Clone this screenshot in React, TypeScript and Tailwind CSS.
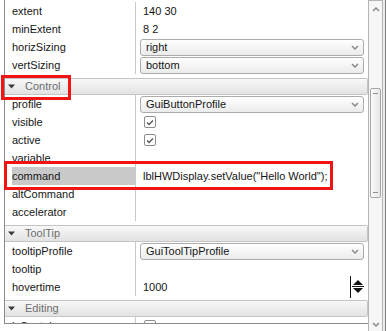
import * as React from "react"

type Field =
  | { name: string; kind: "text"; value: string }
  | { name: string; kind: "select"; value: string }
  | { name: string; kind: "check"; checked: boolean }
  | { name: string; kind: "spin"; value: string }
  | { name: string; kind: "empty" }

interface Group {
  title?: string
  fields: Field[]
}

const groups: Group[] = [
  {
    fields: [
      { name: "extent", kind: "text", value: "140 30" },
      { name: "minExtent", kind: "text", value: "8 2" },
      { name: "horizSizing", kind: "select", value: "right" },
      { name: "vertSizing", kind: "select", value: "bottom" },
    ],
  },
  {
    title: "Control",
    fields: [
      { name: "profile", kind: "select", value: "GuiButtonProfile" },
      { name: "visible", kind: "check", checked: true },
      { name: "active", kind: "check", checked: true },
      { name: "variable", kind: "empty" },
      { name: "command", kind: "text", value: 'lblHWDisplay.setValue("Hello World");' },
      { name: "altCommand", kind: "empty" },
      { name: "accelerator", kind: "empty" },
    ],
  },
  {
    title: "ToolTip",
    fields: [
      { name: "tooltipProfile", kind: "select", value: "GuiToolTipProfile" },
      { name: "tooltip", kind: "empty" },
      { name: "hovertime", kind: "spin", value: "1000" },
    ],
  },
  {
    title: "Editing",
    fields: [{ name: "isContainer", kind: "check", checked: false }],
  },
]

function Chevron({ up = false }: { up?: boolean }) {
  return (
    <svg width="8" height="5" viewBox="0 0 8 5" className="shrink-0">
      <path
        d={up ? "M1 4 L4 1 L7 4" : "M1 1 L4 4 L7 1"}
        fill="none"
        stroke="#8a8a8a"
        strokeWidth="1.5"
      />
    </svg>
  )
}

function SelectBox({ value }: { value: string }) {
  return (
    <div className="mx-[4px] flex h-[17px] flex-1 items-center justify-between rounded-[3px] border border-[#ababab] bg-gradient-to-b from-white to-[#ebebeb] pl-[5px] pr-[4px]">
      <span>{value}</span>
      <Chevron />
    </div>
  )
}

function CheckBox({ checked }: { checked: boolean }) {
  return (
    <div className="ml-[8px] flex h-[12px] w-[12px] items-center justify-center rounded-[2px] border border-[#8c8c8c] bg-white">
      {checked && (
        <svg width="8" height="7" viewBox="0 0 8 7">
          <path d="M1 3.5 L3 5.5 L7 1.5" fill="none" stroke="#555" strokeWidth="1.3" />
        </svg>
      )}
    </div>
  )
}

function SpinIcon() {
  return (
    <svg width="15" height="22" viewBox="0 0 15 22" className="mr-[3px]">
      <line x1="0.5" y1="0" x2="0.5" y2="22" stroke="#111" />
      <path d="M3 9 L13 9 L8 4 Z" fill="#111" />
      <line x1="2" y1="10.5" x2="14" y2="10.5" stroke="#111" />
      <path d="M3 12 L13 12 L8 17 Z" fill="#111" />
    </svg>
  )
}

function Row({ field }: { field: Field }) {
  const selected = field.name === "command"
  return (
    <div className="flex h-[18px] items-center">
      <div className="flex h-full w-[130px] shrink-0 items-center pl-[7px]">
        <div className={`flex h-full flex-1 items-center ${selected ? "bg-[#c9c9c9]" : ""}`}>
          {field.name}
        </div>
      </div>
      <div className="flex h-full flex-1 items-center border-l border-[#c9c9c9]">
        {field.kind === "text" && <span className="pl-[7px]">{field.value}</span>}
        {field.kind === "select" && <SelectBox value={field.value} />}
        {field.kind === "check" && <CheckBox checked={field.checked} />}
        {field.kind === "spin" && (
          <div className="flex flex-1 items-center justify-between pl-[7px]">
            <span>{field.value}</span>
            <SpinIcon />
          </div>
        )}
      </div>
    </div>
  )
}

function GroupHeader({ title }: { title: string }) {
  return (
    <div className="mt-[4px] flex h-[17px] items-center rounded-r-[2px] border-y border-r border-[#c4c4c4] bg-gradient-to-b from-[#f8f8f8] to-[#e2e2e2] pl-[3px] text-[#6e6e6e]">
      <svg width="7" height="5" viewBox="0 0 7 5" className="mr-[10px]">
        <path d="M0 0.5 L7 0.5 L3.5 4.5 Z" fill="#3a3a3a" />
      </svg>
      {title}
    </div>
  )
}

function ScrollBar() {
  return (
    <div className="flex w-[15px] shrink-0 flex-col border-x border-t border-[#b4b4b4] bg-[#f6f6f6]">
      <div className="flex h-[15px] items-center justify-center pt-[2px]">
        <Chevron up />
      </div>
      <div className="flex flex-1 flex-col">
        <div className="mx-[1px] mt-[72px] flex h-[110px] flex-col justify-between rounded-[2px] border border-[#a6a6a6] bg-gradient-to-r from-[#fbfbfb] to-[#e6e6e6] px-[2px] py-[4px]">
          <div className="h-px bg-[#8f8f8f]" />
          <div className="h-px bg-[#8f8f8f]" />
        </div>
      </div>
      <div className="flex h-[14px] items-center justify-center">
        <Chevron />
      </div>
    </div>
  )
}

export default function App() {
  return (
    <div className="relative h-[331px] w-[387px] overflow-hidden bg-white font-['Liberation_Sans',Arial,sans-serif] text-[11px] text-[#161616]">
      <div className="ml-[4px] flex h-[331px] w-[382px] border-r border-[#7d7d86] bg-white">
        <div className="h-[324px] w-[364px] shrink-0 overflow-hidden border-b border-l border-[#8a8a8a] bg-white">
          <div className="pt-[2px]">
            {groups.map((g, i) => (
              <div key={i}>
                {g.title && <GroupHeader title={g.title} />}
                {g.fields.map((f) => (
                  <Row key={f.name} field={f} />
                ))}
              </div>
            ))}
          </div>
        </div>
        <div className="flex shrink-0 bg-[#ececec] pr-[2px]">
          <ScrollBar />
        </div>
      </div>

      {/* red annotation boxes */}
      <div className="pointer-events-none absolute left-[1px] top-[75px] h-[25px] w-[70px] border-[3px] border-[#f01414]" />
      <div className="pointer-events-none absolute left-[4px] top-[161px] h-[29px] w-[329px] border-[3px] border-[#f01414]" />
    </div>
  )
}
